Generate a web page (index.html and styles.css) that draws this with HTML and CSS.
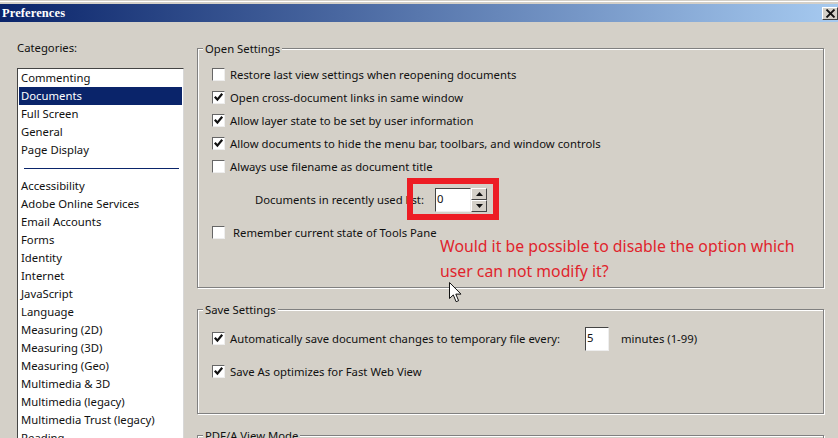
FILE: index.html
```html
<!DOCTYPE html>
<html lang="en">
<head>
<meta charset="utf-8">
<title>Preferences</title>
<link rel="stylesheet" href="styles.css">
</head>
<body>
<svg class="defs" width="0" height="0" aria-hidden="true"><symbol id="tick" viewBox="0 0 11 11"><path d="M1.800 4.800l2.600 2.800L9.200 1.800" stroke="#111" stroke-width="2.200" fill="none"/></symbol></svg>
<div class="dialog">
  <div class="titlebar">
    <span class="title">Preferences</span>
    <span class="close">
      <svg width="11" height="9" viewBox="0 0 11 9"><path d="M1.500 0.500l8 8M9.500 0.500l-8 8" stroke="#111" stroke-width="1.800" fill="none"/></svg>
    </span>
  </div>
  <div class="content">
    <aside class="sidebar">
      <div class="cat-label">Categories:</div>
      <ul class="list">
        <li>Commenting</li>
        <li class="selected">Documents</li>
        <li>Full Screen</li>
        <li>General</li>
        <li>Page Display</li>
        <li class="divider"></li>
        <li>Accessibility</li>
        <li>Adobe Online Services</li>
        <li>Email Accounts</li>
        <li>Forms</li>
        <li>Identity</li>
        <li>Internet</li>
        <li>JavaScript</li>
        <li>Language</li>
        <li>Measuring (2D)</li>
        <li>Measuring (3D)</li>
        <li>Measuring (Geo)</li>
        <li>Multimedia &amp; 3D</li>
        <li>Multimedia (legacy)</li>
        <li>Multimedia Trust (legacy)</li>
        <li>Reading</li>
      </ul>
    </aside>
    <main class="panel">
      <section class="group group-open">
        <h2 class="legend">Open Settings</h2>
        <div class="check"><span class="box"></span>Restore last view settings when reopening documents</div>
        <div class="check"><span class="box"><svg width="11" height="11"><use href="#tick"/></svg></span>Open cross-document links in same window</div>
        <div class="check"><span class="box"><svg width="11" height="11"><use href="#tick"/></svg></span>Allow layer state to be set by user information</div>
        <div class="check"><span class="box"><svg width="11" height="11"><use href="#tick"/></svg></span>Allow documents to hide the menu bar, toolbars, and window controls</div>
        <div class="check"><span class="box"></span>Always use filename as document title</div>
        <div class="recent">
          <span class="recent-label">Documents in recently used list:</span>
          <span class="field field-recent">0</span>
          <span class="spin">
            <span class="spin-btn"><svg width="7" height="4" viewBox="0 0 7 4"><path d="M3.500 0L7 4H0z" fill="#111"/></svg></span>
            <span class="spin-btn"><svg width="7" height="4" viewBox="0 0 7 4"><path d="M0 0h7L3.500 4z" fill="#111"/></svg></span>
          </span>
        </div>
        <div class="check check-tools"><span class="box"></span>Remember current state of Tools Pane</div>
      </section>
      <section class="group group-save">
        <h2 class="legend">Save Settings</h2>
        <div class="check"><span class="box"><svg width="11" height="11"><use href="#tick"/></svg></span><span class="auto-label">Automatically save document changes to temporary file every:</span><span class="field field-min">5</span><span>minutes (1-99)</span></div>
        <div class="check check-fast"><span class="box"><svg width="11" height="11"><use href="#tick"/></svg></span>Save As optimizes for Fast Web View</div>
      </section>
      <section class="group group-pdf">
        <h2 class="legend">PDF/A View Mode</h2>
      </section>
    </main>
  </div>
  <div class="redbox"></div>
  <p class="note">Would it be possible to disable the option which<br>user can not modify it?</p>
  <svg class="cursor" width="13" height="21" viewBox="0 0 13 21"><path d="M0.500 0.500v16l3.800-3.600 2.800 6.800 2.500-1-2.800-6.600H12z" fill="#fff" stroke="#111" stroke-width="1"/></svg>
</div>
</body>
</html>
```
FILE: styles.css
```css
* { box-sizing: border-box; }
html, body { margin: 0; height: 100%; overflow: hidden; }
body { background: #d4d0c8; color: #111; font: 11.300px/18px "Noto Sans", sans-serif; }
.defs { position: absolute; }
.dialog { position: relative; width: 838px; height: 438px; overflow: hidden; border-top: 1px solid #d4d0c8; box-shadow: inset 0 1px 0 #fff; padding-top: 3px; }
.titlebar { height: 18px; display: flex; align-items: center; justify-content: space-between; background: linear-gradient(90deg, #0a246a, #a6caf0); padding-left: 2px; }
.title { color: #fff; font: bold 12.500px/18px "Liberation Serif", serif; letter-spacing: 0.100px; }
.close { width: 16px; height: 13px; display: flex; align-items: center; justify-content: center; background: #d4d0c8; border: 1px solid; border-color: #fff #404040 #404040 #fff; }
.content { display: flex; }
.sidebar { width: 197px; padding: 17px 0 0 17px; flex: none; }
.cat-label { height: 29px; }
.list { list-style: none; margin: 0; padding: 0 1px; width: 167px; height: 400px; background: #fff; border: 1px solid; border-color: #444 #d8d8d8 #fff #444; }
.list li { height: 18px; padding-left: 2px; white-space: nowrap; }
.list .selected { background: #0a246a; color: #fff; }
.list .divider { height: 18px; }
.list .divider::after { content: ""; display: block; margin: 0 3px; height: 9px; border-bottom: 1px solid #0a246a; }
.panel { flex: none; width: 627px; padding-top: 26px; }
.group { position: relative; border: 1px solid #808080; box-shadow: 1px 1px 0 #fff, inset 1px 1px 0 #fff; }
.group-open { height: 240px; padding-top: 14px; margin-bottom: 21px; }
.group-save { height: 105px; padding-top: 17px; margin-bottom: 21px; }
.group-pdf { height: 60px; }
.legend { position: absolute; left: 5px; top: -9px; margin: 0; padding: 0 2px; background: #d4d0c8; font: inherit; }
.check { display: flex; align-items: center; height: 23px; padding-left: 14px; white-space: nowrap; }
.box { flex: none; width: 13px; height: 13px; margin-right: 5px; background: #fff; border: 1px solid; border-color: #666 #eee #eee #666; }
.box svg { display: block; }
.recent { display: flex; align-items: center; height: 22px; margin-top: 11px; padding-left: 57px; }
.recent-label { width: 180px; flex: none; }
.field { background: #fff; border: 1px solid; border-color: #444 #eee #eee #444; padding-left: 1px; }
.field-recent { width: 36px; height: 24px; line-height: 20px; }
.spin { display: flex; flex-direction: column; }
.spin-btn { width: 16px; height: 12px; display: flex; align-items: center; justify-content: center; background: #d4d0c8; border: 1px solid; border-color: #fff #444 #444 #fff; }
.check-tools { margin-top: 10px; }
.check-tools .box { margin-right: 8px; }
.auto-label { width: 355px; flex: none; }
.field-min { width: 24px; height: 24px; margin-right: 12px; line-height: 19px; }
.check-fast { margin-top: 10px; }
.redbox { position: absolute; left: 407px; top: 177px; width: 92px; height: 42px; border: 6px solid #ed1c24; }
.note { position: absolute; left: 440px; top: 233px; margin: 0; color: #e0242c; font: 15.800px/25px "Noto Sans", sans-serif; white-space: nowrap; }
.cursor { position: absolute; left: 449px; top: 281px; }
```
